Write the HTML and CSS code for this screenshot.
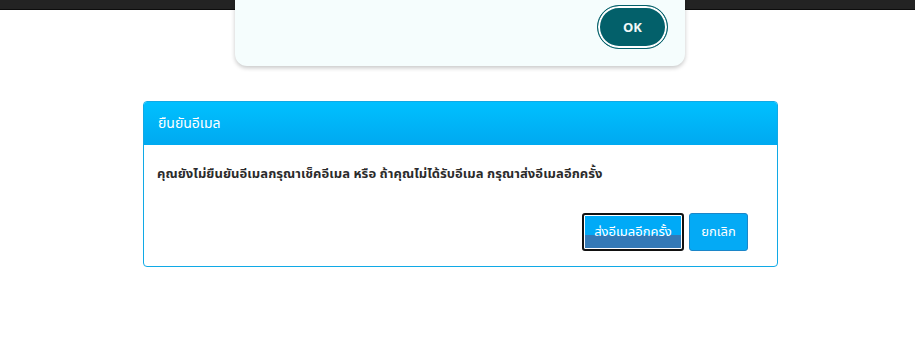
FILE: index.html
```html
<!DOCTYPE html>
<html lang="th">
    <head>
        <meta charset="UTF-8">
        <meta name="viewport" content="width=device-width, initial-scale=1.0">
        <title>ยืนยันอีเมล</title>
        <link rel="stylesheet" href="styles.css">
    </head>
    <body>
        <div class="topbar"></div>

        <div class="toast">
            <button class="toast-ok">OK</button>
        </div>

        <div class="modal">
            <div class="modal-header">ยืนยันอีเมล</div>
            <div class="modal-body">
                <p>คุณยังไม่ยืนยันอีเมลกรุณาเช็คอีเมล หรือ ถ้าคุณไม่ได้รับอีเมล กรุณาส่งอีเมลอีกครั้ง</p>
            </div>
            <div class="modal-footer">
                <button class="btn btn-resend">ส่งอีเมลอีกครั้ง</button>
                <button class="btn btn-cancel">ยกเลิก</button>
            </div>
        </div>
    </body>
</html>
```

FILE: styles.css
```css
body {
    margin: 0;
    padding: 0;
    background-color: #fff;
    font-family: "Noto Sans Thai", "Noto Sans", "DejaVu Sans", sans-serif;
}

.topbar {
    height: 9px;
    background-color: #232323;
    border-bottom: 1px solid #0d0d0d;
}

.toast {
    position: absolute;
    top: -20px;
    left: 235px;
    width: 450px;
    height: 86px;
    box-sizing: border-box;
    padding: 25px 17px 0 0;
    display: flex;
    justify-content: flex-end;
    align-items: flex-start;
    background-color: #f5fdfd;
    border-radius: 12px;
    box-shadow: 0 2px 4px rgba(0, 0, 0, 0.22);
}

.toast-ok {
    width: 71px;
    height: 44px;
    border-radius: 22px;
    border: 1px solid #03606a;
    box-shadow: inset 0 0 0 2px #fff;
    background-color: #03606a;
    color: #f2f8f8;
    font-family: "Open Sans", "Noto Sans", sans-serif;
    font-weight: bold;
    font-size: 13px;
    cursor: pointer;
}

.modal {
    margin: 91px 0 0 143px;
    width: 635px;
    box-sizing: border-box;
    border: 1px solid #10a9e6;
    border-radius: 4px;
    overflow: hidden;
}

.modal-header {
    height: 43px;
    line-height: 43px;
    padding: 0 14px;
    color: #fff;
    font-size: 14px;
    background-image: linear-gradient(180deg, #00c0ff, #00a9f0);
}

.modal-body {
    padding: 0 13px;
}

.modal-body p {
    margin: 0;
    padding-top: 19px;
    height: 30px;
    font-size: 13px;
    letter-spacing: 0.06px;
    font-weight: bold;
    color: #2b2b2b;
}

.modal-footer {
    display: flex;
    justify-content: flex-end;
    gap: 5px;
    padding: 19px 29px 15px 0;
}

.btn {
    height: 38px;
    padding: 0;
    border-radius: 3px;
    color: #fff;
    font-family: inherit;
    font-size: 13px;
    white-space: nowrap;
    cursor: pointer;
}

.btn-resend {
    width: 102px;
    border: 2px solid #111;
    box-shadow: inset 0 0 0 1px #fff;
    background-image: linear-gradient(180deg, #00aaf7 0%, #00aaf7 58%, #3479b6 58%, #3479b6 100%);
}

.btn-cancel {
    width: 59px;
    border: 1px solid #1c86c8;
    background-color: #04aaf5;
}
```
